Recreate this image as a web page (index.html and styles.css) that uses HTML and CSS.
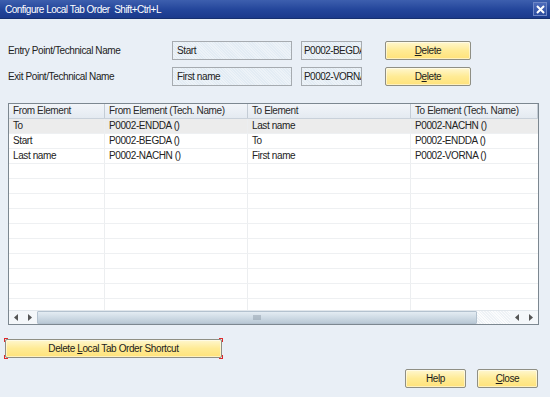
FILE: index.html
```html
<!DOCTYPE html>
<html>
<head>
<meta charset="utf-8">
<link rel="stylesheet" href="styles.css">
</head>
<body>
<div class="window">
  <div class="titlebar">
    <span class="title">Configure Local Tab Order&nbsp; Shift+Ctrl+L</span>
    <span class="xbtn"><svg width="9" height="9" viewBox="0 0 9 9"><path d="M1 1L8 8M8 1L1 8" stroke="#fff" stroke-width="2"/></svg></span>
  </div>
  <div class="content">
    <div class="formrow">
      <span class="label">Entry Point/Technical Name</span>
      <span class="field f1">Start</span>
      <span class="field f2">P0002-BEGDA</span>
      <span class="btn bdel"><span><u>D</u>elete</span></span>
    </div>
    <div class="formrow r2">
      <span class="label">Exit Point/Technical Name</span>
      <span class="field f1">First name</span>
      <span class="field f2">P0002-VORNA</span>
      <span class="btn bdel"><span>D<u>e</u>lete</span></span>
    </div>
    <div class="grid">
      <div class="rows">
        <div class="row head"><span>From Element</span><span>From Element (Tech. Name)</span><span>To Element</span><span>To Element (Tech. Name)</span></div>
        <div class="row sel"><span>To</span><span>P0002-ENDDA ()</span><span>Last name</span><span>P0002-NACHN ()</span></div>
        <div class="row"><span>Start</span><span>P0002-BEGDA ()</span><span>To</span><span>P0002-ENDDA ()</span></div>
        <div class="row"><span>Last name</span><span>P0002-NACHN ()</span><span>First name</span><span>P0002-VORNA ()</span></div>
        <div class="row"><span></span><span></span><span></span><span></span></div>
        <div class="row"><span></span><span></span><span></span><span></span></div>
        <div class="row"><span></span><span></span><span></span><span></span></div>
        <div class="row"><span></span><span></span><span></span><span></span></div>
        <div class="row"><span></span><span></span><span></span><span></span></div>
        <div class="row"><span></span><span></span><span></span><span></span></div>
        <div class="row"><span></span><span></span><span></span><span></span></div>
        <div class="row"><span></span><span></span><span></span><span></span></div>
        <div class="row"><span></span><span></span><span></span><span></span></div>
        <div class="row"><span></span><span></span><span></span><span></span></div>
      </div>
      <div class="hscroll">
        <span class="arr"><svg width="4" height="7" viewBox="0 0 4 7"><path d="M4 0L0 3.5L4 7Z" fill="#555"/></svg></span>
        <span class="arr"><svg width="4" height="7" viewBox="0 0 4 7"><path d="M0 0L4 3.5L0 7Z" fill="#555"/></svg></span>
        <span class="thumb"><span class="grip"></span></span>
        <span class="track"></span>
        <span class="arr"><svg width="4" height="7" viewBox="0 0 4 7"><path d="M4 0L0 3.5L4 7Z" fill="#555"/></svg></span>
        <span class="arr"><svg width="4" height="7" viewBox="0 0 4 7"><path d="M0 0L4 3.5L0 7Z" fill="#555"/></svg></span>
      </div>
    </div>
    <div class="shortcut">
      <span class="btn bwide"><span>Delete <u>L</u>ocal Tab Order Shortcut</span></span>
      <i class="c tl"></i><i class="c tr"></i><i class="c bl"></i><i class="c br"></i>
    </div>
    <div class="footer">
      <span class="btn bsm"><span>Help</span></span>
      <span class="btn bsm"><span><u>C</u>lose</span></span>
    </div>
  </div>
</div>
</body>
</html>
```

FILE: styles.css
```css
* { box-sizing: border-box; }
html, body { margin: 0; padding: 0; }
body {
  width: 550px; height: 397px; overflow: hidden;
  font-family: "Liberation Sans", Arial, sans-serif;
  font-size: 10px;
  letter-spacing: -0.4px;
  color: #222;
  background: #e9eff6;
}
.window { width: 550px; height: 397px; display: flex; flex-direction: column; }
.titlebar {
  height: 19px;
  background: linear-gradient(#3d5fae, #23459a 55%, #1b3a8c);
  border-bottom: 1px solid #16306f;
  display: flex; align-items: center; justify-content: space-between;
  padding: 0 3px 0 5px;
}
.title { color: #fff; font-size: 10px; letter-spacing: -0.5px; }
.xbtn {
  width: 14px; height: 14px;
  border: 1px solid #6f87c6;
  background: linear-gradient(#4d6bbb, #2c4c9f);
  display: flex; align-items: center; justify-content: center;
}
.content { flex: 1; position: relative; }
.formrow { display: flex; align-items: center; height: 19px; margin-top: 22px; }
.formrow.r2 { margin-top: 7px; }
.label { width: 172px; padding-left: 8px; }
.field {
  height: 19px; line-height: 17px;
  border: 1px solid #a6abb0;
  background-color: #e3ecf4;
  background-image: repeating-linear-gradient(45deg, rgba(255,255,255,0.35) 0 1px, transparent 1px 2px);
  padding-left: 4px;
  white-space: nowrap; overflow: hidden;
}
.f1 { width: 120px; }
.f2 { width: 61px; margin-left: 9px; padding-left: 2px; letter-spacing: -0.55px; }
.btn {
  display: flex; align-items: center; justify-content: center;
  height: 19px;
  border: 1px solid #8f8f84;
  border-radius: 2px;
  background: linear-gradient(#fff7cf, #ffeb95 50%, #ffe27a);
  box-shadow: inset 0 0 0 1px rgba(255,255,255,0.5);
  color: #1c1c1c;
  white-space: pre;
}
.bdel { width: 86px; margin-left: 23px; }
.grid {
  margin: 17px 0 0 8px;
  width: 531px; height: 222px;
  border: 1px solid #7c8790;
  background: #fff;
  display: flex; flex-direction: column;
}
.rows { flex: 1; overflow: hidden; }
.row {
  display: grid;
  grid-template-columns: 96px 143px 163px 1fr;
  height: 15px;
  border-bottom: 1px solid #eef0f2;
}
.row span {
  border-right: 1px solid #eceef0;
  padding-left: 4px; line-height: 14px;
  white-space: nowrap; overflow: hidden;
}
.row span:last-child { border-right: 0; }
.row.head { background: linear-gradient(#f2f5f9, #e4eaf1); border-bottom: 1px solid #c9d1da; }
.row.head span { border-right: 1px solid #c4ccd5; color: #2a2a2a; }
.row.sel { background: #ececec; }
.hscroll {
  height: 14px;
  display: flex; align-items: stretch;
  background: #f4f7fa;
  border-top: 1px solid #e2e7ec;
}
.arr { width: 14px; display: flex; align-items: center; justify-content: center; }
.thumb {
  width: 440px;
  background: linear-gradient(#e4ecf3, #cfdbe5 50%, #bac9d6);
  border: 1px solid #b4c2cf;
  border-radius: 1px;
  display: flex; align-items: center; justify-content: center;
}
.grip {
  width: 8px; height: 5px;
  background-image: radial-gradient(circle, #8a97a4 0.6px, transparent 0.8px);
  background-size: 2px 2px;
}
.track {
  flex: 1;
  background-image: repeating-linear-gradient(45deg, #eef2f6 0 1px, #fbfcfd 1px 2px);
}
.shortcut { position: relative; margin: 14px 0 0 5px; width: 217px; height: 19px; }
.bwide { width: 217px; }
.c { position: absolute; width: 4px; height: 4px; border-color: #e0282c; border-style: solid; border-width: 0; }
.tl { left: -1px; top: -1px; border-left-width: 1px; border-top-width: 1px; }
.tr { right: -1px; top: -1px; border-right-width: 1px; border-top-width: 1px; }
.bl { left: -1px; bottom: -1px; border-left-width: 1px; border-bottom-width: 1px; }
.br { right: -1px; bottom: -1px; border-right-width: 1px; border-bottom-width: 1px; }
.footer { display: flex; justify-content: flex-end; gap: 11px; margin: 11px 12px 0 0; }
.bsm { width: 61px; height: 19px; }
u { text-decoration: underline; text-underline-offset: 1px; }
```
